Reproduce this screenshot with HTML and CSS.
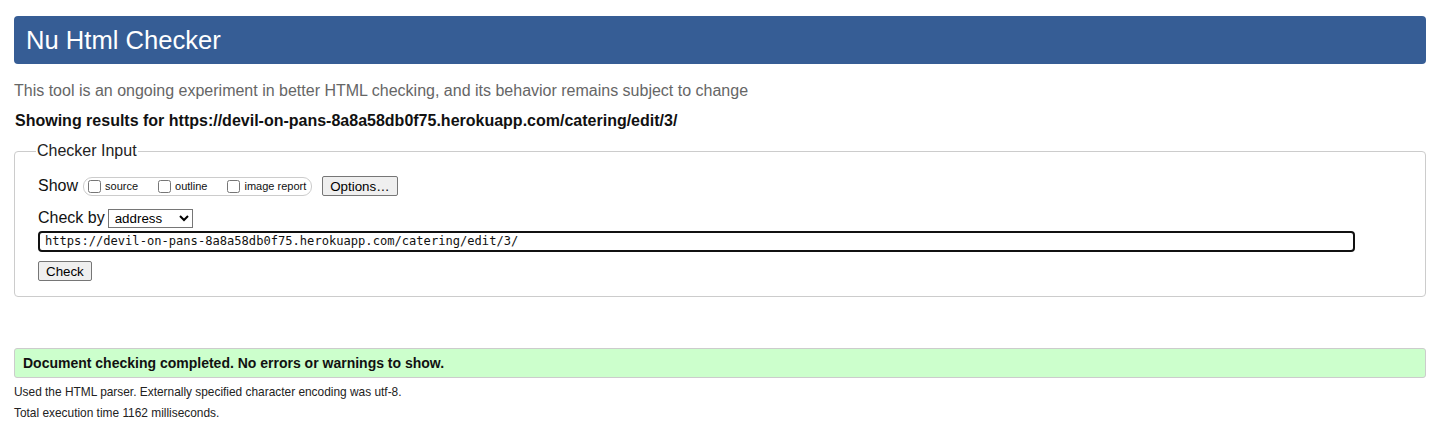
FILE: index.html
```html
<!DOCTYPE html>
<html>
<head>
<meta charset="utf-8">
<link rel="stylesheet" href="styles.css">
</head>
<body>
<h1 class="title">Nu Html Checker</h1>
<p class="intro">This tool is an ongoing experiment in better HTML checking, and its behavior remains subject to change</p>
<p class="showing">Showing results for https://devil-on-pans-8a8a58db0f75.herokuapp.com/catering/edit/3/</p>
<fieldset class="checker">
  <legend>Checker Input</legend>
  <div class="row show-row">
    <span class="label">Show</span>
    <span class="opts">
      <label class="opt"><input type="checkbox">source</label>
      <label class="opt"><input type="checkbox">outline</label>
      <label class="opt"><input type="checkbox">image report</label>
    </span>
    <button class="btn options">Options…</button>
  </div>
  <div class="row by-row">
    <span class="label">Check by</span>
    <select class="sel"><option>address</option></select>
  </div>
  <div class="url">https://devil-on-pans-8a8a58db0f75.herokuapp.com/catering/edit/3/</div>
  <button class="btn check">Check</button>
</fieldset>
<div class="success">Document checking completed. No errors or warnings to show.</div>
<p class="details">Used the HTML parser. Externally specified character encoding was utf-8.</p>
<p class="details">Total execution time 1162 milliseconds.</p>
</body>
</html>
```
FILE: styles.css
```css
html, body {
  margin: 0;
  padding: 0;
  background: #fff;
}
body {
  font-family: "Liberation Sans", Arial, sans-serif;
  color: #000;
  padding: 16px 25px 0 14px;
}
.title {
  margin: 0;
  height: 48px;
  line-height: 48px;
  padding: 0 12px;
  background: #365d95;
  color: #fff;
  font-weight: normal;
  font-size: 25.6px;
  border-radius: 4px;
}
.intro {
  margin: 17px 0 0 0;
  font-size: 16px;
  line-height: 20px;
  color: #666;
}
.showing {
  margin: 10px 0 0 1px;
  font-size: 16px;
  line-height: 20px;
  font-weight: bold;
  color: #111;
}
.checker {
  margin: 11px 0 0 0;
  padding: 15px 23px 15px 23px;
  border: 1px solid #ccc;
  border-radius: 4px;
}
.checker legend {
  font-size: 16px;
  color: #222;
  padding: 0 1px;
  margin-left: -2px;
  line-height: 18px;
}
.row {
  display: flex;
  align-items: center;
}
.label {
  font-size: 16px;
  color: #111;
}
.show-row {
  height: 22px;
}
.opts {
  display: inline-flex;
  align-items: center;
  margin-left: 5px;
  height: 17px;
  border: 1px solid #ccc;
  border-radius: 9px;
  padding: 0 5px 0 4px;
}
.opt {
  display: inline-flex;
  align-items: center;
  font-size: 11px;
  margin-right: 20px;
  color: #111;
}
.opt:last-child {
  margin-right: 0;
}
.opt input {
  margin: 0 4px 0 0;
  width: 13px;
  height: 13px;
}
.btn {
  font-family: "Liberation Sans", Arial, sans-serif;
  font-size: 13.33px;
  color: #000;
  background: #efefef;
  border: 1px solid #767676;
  border-radius: 2px;
  padding: 1px 7px;
  height: 20px;
}
.options {
  margin-left: 10px;
}
.by-row {
  margin-top: 11px;
  height: 20px;
}
.sel {
  margin-left: 3px;
  font-family: "Liberation Sans", Arial, sans-serif;
  font-size: 13.33px;
  width: 85px;
  height: 19px;
  border: 1px solid #767676;
  border-radius: 0;
  background: #fff;
  padding: 0 0 0 2px;
}
.url {
  box-sizing: border-box;
  margin-top: 3px;
  width: 1317px;
  height: 21px;
  border: 2px solid #111;
  border-radius: 4px;
  font-family: "DejaVu Sans Mono", "Liberation Mono", monospace;
  font-size: 12.1px;
  line-height: 17px;
  padding-left: 5px;
  color: #111;
}
.check {
  display: block;
  margin-top: 9px;
}
.success {
  margin-top: 51px;
  height: 28px;
  line-height: 28px;
  background: #ccffcc;
  border: 1px solid #ccc;
  border-radius: 3px;
  padding-left: 8px;
  font-weight: bold;
  font-size: 14px;
  color: #111;
}
.details {
  margin: 7px 0 0 0;
  font-size: 11.9px;
  line-height: 14px;
  color: #222;
}
.details + .details {
  margin-top: 7px;
}
```
